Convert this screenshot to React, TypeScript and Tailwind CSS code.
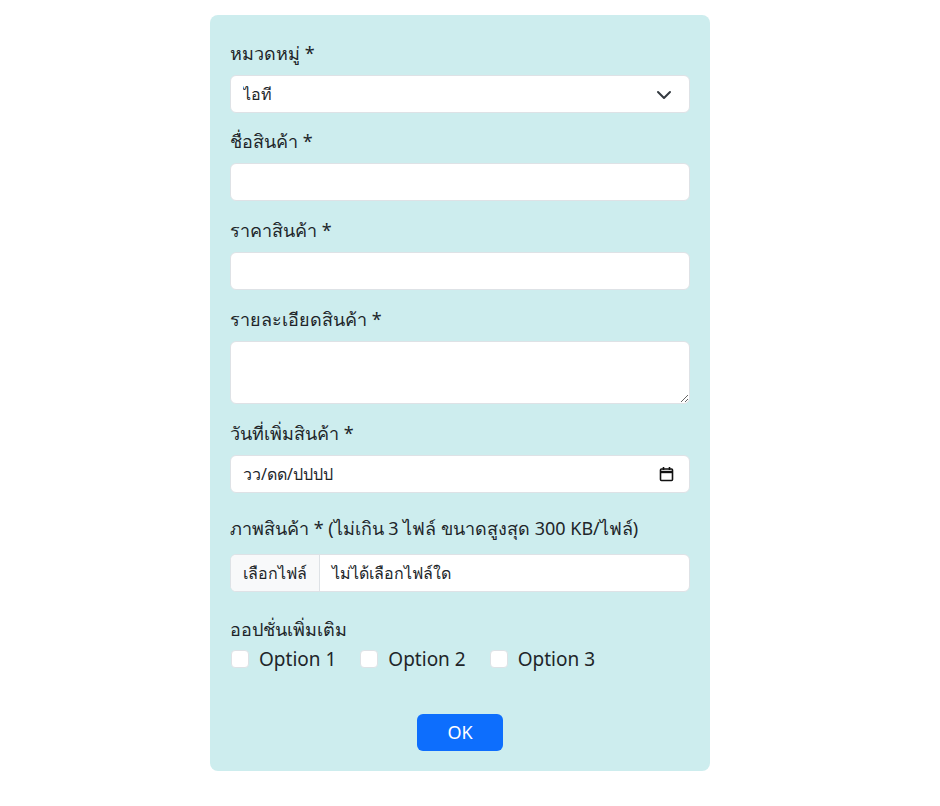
import { useState } from "react";

const options = ["Option 1", "Option 2", "Option 3"];

function Label({ children, className = "" }: { children: React.ReactNode; className?: string }) {
  return <label className={`block text-[18px] leading-[27px] text-[#212529] ${className}`}>{children}</label>;
}

export default function App() {
  const [category, setCategory] = useState("it");

  return (
    <div className="min-h-[806px] bg-white pt-[15px] pl-[210px] font-['Noto_Sans',sans-serif] text-[#212529]">
      <form className="w-[500px] h-[756px] bg-[#cdedee] rounded-lg px-5 pt-[25px] pb-5 flex flex-col">
        <div className="mb-[15px]">
          <Label className="mb-2">หมวดหมู่ *</Label>
          <div className="relative">
            <select
              value={category}
              onChange={(e) => setCategory(e.target.value)}
              className="w-full h-[38px] appearance-none bg-white border border-[#dee2e6] rounded-md pl-3 pr-10 text-base outline-none"
            >
              <option value="it">ไอที</option>
              <option value="home">ของใช้ในบ้าน</option>
            </select>
            <svg className="absolute right-[18px] top-[12px] w-4 h-4 pointer-events-none" viewBox="0 0 16 16" fill="none" stroke="#343a40" strokeWidth="2" strokeLinecap="round" strokeLinejoin="round">
              <path d="m2 5 6 6 6-6" />
            </svg>
          </div>
        </div>

        <div className="mb-4">
          <Label className="mb-2">ชื่อสินค้า *</Label>
          <input type="text" className="w-full h-[38px] bg-white border border-[#dee2e6] rounded-md px-3 text-base outline-none" />
        </div>

        <div className="mb-4">
          <Label className="mb-2">ราคาสินค้า *</Label>
          <input type="text" className="w-full h-[38px] bg-white border border-[#dee2e6] rounded-md px-3 text-base outline-none" />
        </div>

        <div className="mb-4">
          <Label className="mb-2">รายละเอียดสินค้า *</Label>
          <textarea className="block w-full h-[63px] bg-white border border-[#dee2e6] rounded-md px-3 py-1.5 text-base outline-none" />
        </div>

        <div className="mb-[22px]">
          <Label className="mb-2">วันที่เพิ่มสินค้า *</Label>
          <div className="w-full h-[38px] bg-white border border-[#dee2e6] rounded-md pl-3 pr-[15px] flex items-center justify-between text-base">
            <span>วว/ดด/ปปปป</span>
            <svg className="w-[15px] h-[16px]" viewBox="0 0 15 16" fill="none" stroke="#111" strokeWidth="1.6">
              <rect x="1.5" y="3" width="12" height="11.5" rx="1" />
              <path d="M1.5 6h12" strokeWidth="2.4" />
              <path d="M4.5 1v3M10.5 1v3" />
            </svg>
          </div>
        </div>

        <div className="mb-[24px]">
          <Label className="mb-3">ภาพสินค้า * (ไม่เกิน 3 ไฟล์ ขนาดสูงสุด 300 KB/ไฟล์)</Label>
          <div className="w-full h-[38px] bg-white border border-[#dee2e6] rounded-md flex items-center text-base overflow-hidden">
            <span className="h-full flex items-center px-3 bg-[#f8f9fa] border-r border-[#dee2e6]">เลือกไฟล์</span>
            <span className="pl-3">ไม่ได้เลือกไฟล์ใด</span>
          </div>
        </div>

        <div>
          <div className="text-[18px] leading-[27px]">ออปชั่นเพิ่มเติม</div>
          <div className="flex items-center gap-[23px] mt-px">
            {options.map((o) => (
              <label key={o} className="flex items-center gap-[10px] text-[19px] leading-[30px]">
                <span className="w-[18px] h-[18px] bg-white border border-[#dee2e6] rounded-[4px] ml-px" />
                {o}
              </label>
            ))}
          </div>
        </div>

        <div className="mt-auto flex justify-center">
          <button type="button" className="w-[86px] h-[37px] bg-[#0d6efd] text-white rounded-md text-[18px]">
            OK
          </button>
        </div>
      </form>
    </div>
  );
}
